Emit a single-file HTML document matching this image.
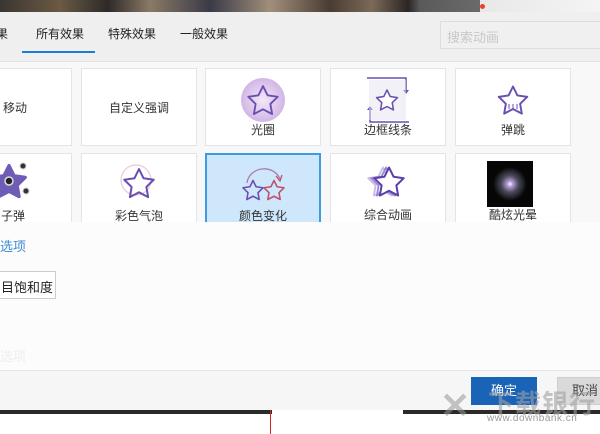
<!DOCTYPE html>
<html><head><meta charset="utf-8">
<style>
*{margin:0;padding:0;box-sizing:border-box}
body{width:600px;height:434px;overflow:hidden;position:relative;background:#f8f8f8;font-family:"Liberation Sans","Noto Sans CJK SC",sans-serif;font-size:12px;color:#222}
.a{position:absolute}
.card{position:absolute;background:#fff;border:1px solid #e2e4ea;text-align:center}
.lbl{position:absolute;left:0;right:0;font-size:12px;color:#333}
</style></head><body>
<svg width="0" height="0" style="position:absolute"><defs>
<path id="st" d="M0,-10 L2.94,-4.05 9.51,-3.09 4.76,1.55 5.88,8.09 0,5 -5.88,8.09 -4.76,1.55 -9.51,-3.09 -2.94,-4.05Z" stroke-linejoin="round"/>
</defs></svg>
<div class="a" style="left:0;top:0;width:600px;height:12px;background:linear-gradient(90deg,#3a3630 0,#6b5a44 10%,#2d2a28 18%,#8a7a66 25%,#3a3a48 35%,#a08f7a 45%,#4a3c34 55%,#7b6a58 62%,#2a2624 68%,#5a5a5a 70%,#6a6a6a 80%,#e8e8e8 80%,#f4f4f4 100%)"></div>
<div class="a" style="left:480px;top:4px;width:5px;height:5px;border-radius:50%;background:#e8412c"></div>
<div class="a" style="left:0;top:12px;width:600px;height:50px;background:#efefef;border-bottom:1px solid #e2e2e2"></div>
<div class="a" style="left:-4px;top:25px;font-size:12px">果</div>
<div class="a" style="left:36px;top:25px;font-size:12px">所有效果</div>
<div class="a" style="left:22px;top:51px;width:73px;height:2px;background:#1c7cd5"></div>
<div class="a" style="left:108px;top:25px;font-size:12px">特殊效果</div>
<div class="a" style="left:180px;top:25px;font-size:12px">一般效果</div>
<div class="a" style="left:440px;top:21px;width:165px;height:28px;border:1px solid #dedede;background:#f0f0f0;color:#c8c8c8;padding:5px 6px;font-size:13px">搜索动画</div>
<div class="card" style="left:-10px;top:68px;width:82px;height:78px"><div class="lbl" style="top:30px;text-align:left;left:12px">移动</div></div>
<div class="card" style="left:81px;top:68px;width:116px;height:78px"><div class="lbl" style="top:30px">自定义强调</div></div>
<div class="card" style="left:205px;top:68px;width:116px;height:78px">
<svg class="a" style="left:34px;top:8px" width="46" height="46" viewBox="-23 -23 46 46"><defs><radialGradient id="g1"><stop offset="0" stop-color="#f3e8f8"/><stop offset="1" stop-color="#d2b6e6"/></radialGradient></defs><ellipse rx="22" ry="22" fill="url(#g1)"/><use href="#st" transform="scale(1.55) translate(0,1)" fill="none" stroke="#6a4fb3" stroke-width="1.2"/></svg>
<div class="lbl" style="top:52px">光圈</div></div>
<div class="card" style="left:330px;top:68px;width:116px;height:78px">
<svg class="a" style="left:34px;top:8px" width="46" height="46" viewBox="0 0 46 46"><path d="M2,1 H41 V14" fill="none" stroke="#6a4fb3" stroke-width="1.5"/><path d="M38,13 L41,17 44,13Z" fill="#6a4fb3"/><path d="M44,45 H5 V32" fill="none" stroke="#6a4fb3" stroke-width="1.5"/><path d="M2,33 L5,29 8,33Z" fill="#6a4fb3"/><rect x="4" y="3" width="37" height="40" fill="#e8e4f2" opacity=".5"/><use href="#st" transform="translate(22,24) scale(1.1)" fill="#fff" stroke="#6a4fb3" stroke-width="1.4"/></svg>
<div class="lbl" style="top:52px">边框线条</div></div>
<div class="card" style="left:455px;top:68px;width:116px;height:78px">
<svg class="a" style="left:34px;top:8px" width="46" height="46" viewBox="-23 -23 46 46"><use href="#st" transform="scale(1.5) translate(0,1)" fill="none" stroke="#6a4fb3" stroke-width="1.3"/><path d="M-4,4 v5 M0,4 v5 M4,4 v5" stroke="#6a4fb3" stroke-width="1"/></svg>
<div class="lbl" style="top:52px">弹跳</div></div>
<div class="card" style="left:-10px;top:153px;width:82px;height:80px">
<svg class="a" style="left:2px;top:4px" width="46" height="46" viewBox="-16 -23 46 46"><use href="#st" transform="scale(1.7) translate(0,1)" fill="#6e5cb6" stroke="#6e5cb6" stroke-width="2"/><circle cx="0" cy="0" r="4" fill="#222" stroke="#ddd" stroke-width="1.5"/><circle cx="14" cy="-15" r="3" fill="#333" stroke="#ccc"/><circle cx="17" cy="10" r="3" fill="#333" stroke="#ccc"/></svg>
<div class="lbl" style="top:53px;text-align:left;left:10px">子弹</div></div>
<div class="card" style="left:81px;top:153px;width:116px;height:80px">
<svg class="a" style="left:34px;top:6px" width="46" height="46" viewBox="-23 -23 46 46"><circle cx="-3" cy="-3" r="15" fill="none" stroke="#e8c8d8" stroke-width="1.2"/><use href="#st" transform="scale(1.55) translate(0,1)" fill="none" stroke="#6a4fb3" stroke-width="1.3"/></svg>
<div class="lbl" style="top:53px">彩色气泡</div></div>
<div class="card" style="left:205px;top:153px;width:116px;height:80px;background:#cfe7fb;border:2px solid #3d9be6">
<svg class="a" style="left:32px;top:4px" width="50" height="46" viewBox="0 0 50 46"><path d="M8,24 C10,8 34,4 41,20" fill="none" stroke="#b07ab0" stroke-width="1.3"/><path d="M37,17 L41,22 43,16" fill="none" stroke="#c05070" stroke-width="1.3"/><use href="#st" transform="translate(14,32) scale(1.05)" fill="none" stroke="#6a4fb3" stroke-width="1.5"/><use href="#st" transform="translate(35,32) scale(1.05)" fill="none" stroke="#c0506e" stroke-width="1.5"/></svg>
<div class="lbl" style="top:52px">颜色变化</div></div>
<div class="card" style="left:330px;top:153px;width:116px;height:80px">
<svg class="a" style="left:32px;top:4px" width="50" height="46" viewBox="-25 -23 50 46"><use href="#st" transform="translate(-5,2) scale(1.55)" fill="none" stroke="#c8bce6" stroke-width="1.2"/><use href="#st" transform="translate(-2,2) scale(1.55)" fill="none" stroke="#9a86d0" stroke-width="1.2"/><use href="#st" transform="translate(1,2) scale(1.55)" fill="#fff" stroke="#5a40a8" stroke-width="1.3"/></svg>
<div class="lbl" style="top:52px">综合动画</div></div>
<div class="card" style="left:455px;top:153px;width:116px;height:80px">
<svg class="a" style="left:31px;top:7px" width="46" height="46" viewBox="0 0 46 46"><defs><radialGradient id="g2"><stop offset="0" stop-color="#fff"/><stop offset=".15" stop-color="#b8a0e0"/><stop offset=".5" stop-color="#4a4a5a"/><stop offset="1" stop-color="#050505"/></radialGradient></defs><rect width="46" height="46" fill="#060606"/><circle cx="23" cy="23" r="17" fill="url(#g2)"/></svg>
<div class="lbl" style="top:52px">酷炫光晕</div></div>
<div class="a" style="left:0;top:222px;width:600px;height:150px;background:#fcfcfc"></div>
<div class="a" style="left:0;top:236px;color:#3d8ad6;font-size:13px">选项</div>
<div class="a" style="left:-6px;top:271px;width:62px;height:28px;background:#fff;border:1px solid #ccc;font-size:13px;padding:5px 0 0 6px">目饱和度</div>
<div class="a" style="left:0;top:346px;color:#eee;font-size:13px">选项</div>
<div class="a" style="left:0;top:370px;width:600px;height:1px;background:#e6e6e6"></div>
<div class="a" style="left:0;top:371px;width:600px;height:39px;background:#f6f6f6"></div>
<div class="a" style="left:471px;top:377px;width:66px;height:28px;background:#1a64b8;color:#fff;font-size:13px;text-align:center;line-height:28px">确定</div>
<div class="a" style="left:557px;top:377px;width:60px;height:28px;background:#dadada;border:1px solid #cfcfcf;color:#444;font-size:13px;padding-left:14px;line-height:26px">取消</div>
<div class="a" style="left:0;top:410px;width:600px;height:24px;background:#fff"></div>
<div class="a" style="left:0;top:410px;width:272px;height:4px;background:#2a2a2a"></div>
<div class="a" style="left:403px;top:410px;width:197px;height:4px;background:#2a2a2a"></div>
<div class="a" style="left:270px;top:410px;width:1px;height:24px;background:#e02020"></div>
<div class="a" style="left:440px;top:388px;font-size:36px;color:rgba(150,150,150,.55);font-weight:bold;line-height:36px">✕</div>
<div class="a" style="left:488px;top:384px;font-size:26px;color:rgba(160,160,160,.6);font-weight:bold;letter-spacing:1px">下载银行</div>
<div class="a" style="left:487px;top:413px;font-size:10px;color:#999;letter-spacing:.5px">www.downbank.cn</div>
</body></html>
